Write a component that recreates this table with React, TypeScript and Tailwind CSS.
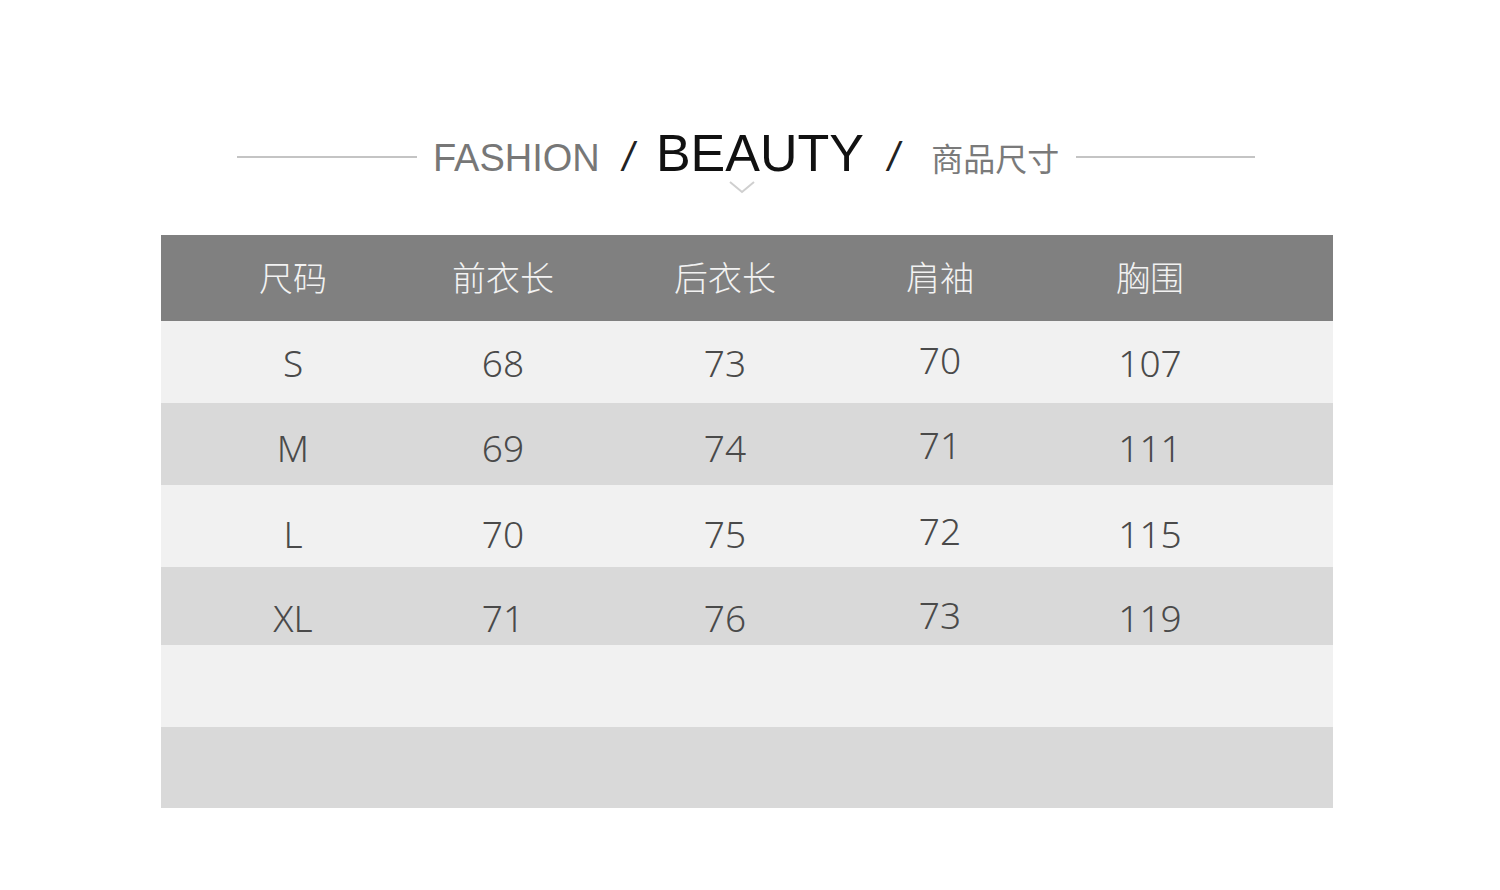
const headers = ["尺码", "前衣长", "后衣长", "肩袖", "胸围"];

const rows: string[][] = [
  ["S", "68", "73", "70", "107"],
  ["M", "69", "74", "71", "111"],
  ["L", "70", "75", "72", "115"],
  ["XL", "71", "76", "73", "119"],
  ["", "", "", "", ""],
  ["", "", "", "", ""],
];

// row heights and a small downward drift of the text, as in the picture
const rowStyles = [
  "h-[82px] bg-[#f1f1f1]",
  "h-[82px] bg-[#d9d9d9]",
  "h-[82px] bg-[#f1f1f1]",
  "h-[78px] bg-[#d9d9d9]",
  "h-[82px] bg-[#f1f1f1]",
  "h-[81px] bg-[#d9d9d9]",
];
const textShift = ["translate-y-[1px]", "translate-y-[4px]", "translate-y-[8px]", "translate-y-[12px]", "", ""];

const colWidths = ["w-[214px]", "w-[206px]", "w-[238px]", "w-[192px]", "w-[228px]"];

export default function App() {
  return (
    <div className="w-[1500px] h-[890px] bg-white flex flex-col items-start">
      {/* title */}
      <div className="ml-[237px] mt-[127px] flex items-center h-[60px]">
        <div className="w-[180px] h-[2px] bg-[#c4c4c4]" />
        <div className="relative -top-[4px] ml-[16px] flex items-baseline font-['Liberation_Sans',Arial,sans-serif]">
          <span className="text-[38px] text-[#777777] leading-none">FASHION</span>
          <span className="ml-[23px] text-[40px] text-[#222222] leading-none italic">/</span>
          <span className="relative ml-[22px] text-[52px] text-[#111111] leading-none">
            BEAUTY
            <svg className="absolute left-[72px] top-[53px]" width="28" height="14" viewBox="0 0 28 14">
              <path d="M2 2 L14 12 L26 2" fill="none" stroke="#cfcfcf" strokeWidth="2" />
            </svg>
          </span>
          <span className="ml-[24px] text-[40px] text-[#222222] leading-none italic">/</span>
          <span className="ml-[32px] text-[32px] text-[#7a7a7a] leading-none font-['Noto_Sans_CJK_SC',sans-serif]">
            商品尺寸
          </span>
        </div>
        <div className="ml-[17px] w-[179px] h-[2px] bg-[#c4c4c4]" />
      </div>

      {/* size table */}
      <div className="ml-[161px] mt-[48px] w-[1172px] font-['Noto_Sans',sans-serif]">
        <div className="h-[86px] bg-[#808080] flex items-center pl-[25px]">
          {headers.map((h, i) => (
            <div
              key={h}
              className={`${colWidths[i]} -translate-y-[2px] text-center text-[34px] font-light text-[#f2f2f2] font-['Noto_Sans_CJK_SC',sans-serif]`}
            >
              {h}
            </div>
          ))}
        </div>
        {rows.map((r, ri) => (
          <div key={ri} className={`flex items-center pl-[25px] ${rowStyles[ri]}`}>
            {r.map((c, ci) => (
              <div
                key={ci}
                className={`${colWidths[ci]} ${textShift[ri]} text-center text-[37px] font-light text-[#4a4a4a]`}
              >
                <span className={ci === 3 ? "relative -top-[3px]" : ""}>{c}</span>
              </div>
            ))}
          </div>
        ))}
      </div>
    </div>
  );
}
